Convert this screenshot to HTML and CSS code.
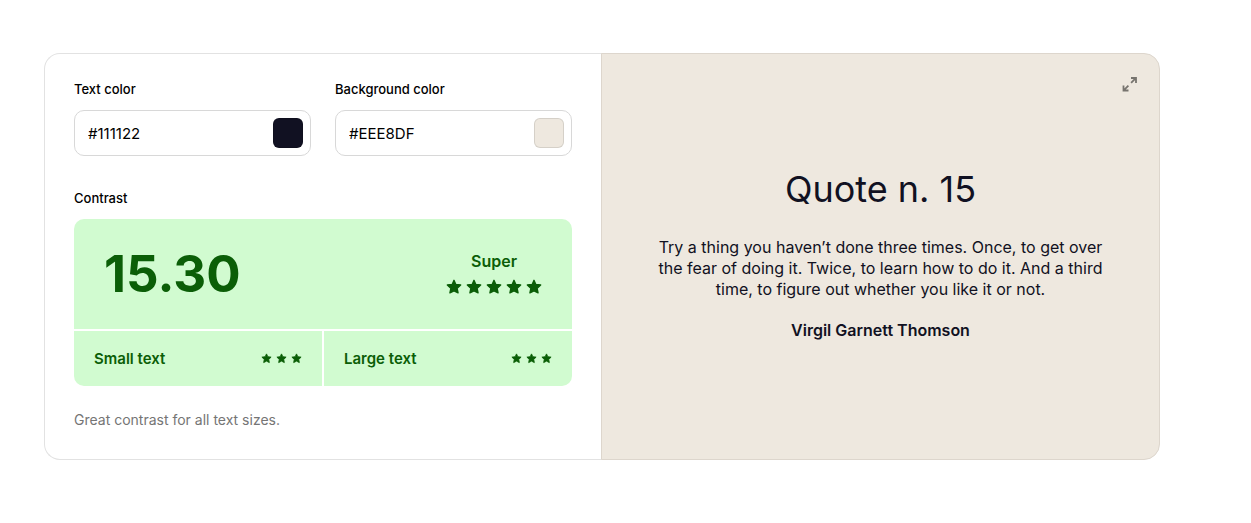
FILE: index.html
```html
<!DOCTYPE html>
<html lang="en">
<head>
<meta charset="utf-8">
<title>Contrast checker</title>
<link rel="stylesheet" href="styles.css">
</head>
<body>
<svg class="defs" aria-hidden="true">
  <symbol id="star" viewBox="0 0 16 16">
    <path d="M8 1.300l1.900 4.100 4.800.6-3.500 3.300.9 4.600L8 11.800l-4.100 2.100.9-4.600L1.300 6l4.800-.6z" fill="currentColor" stroke="currentColor" stroke-width="1.300" stroke-linejoin="round"/>
  </symbol>
</svg>
<main class="checker">
  <section class="panel settings">
    <div class="fields">
      <div class="field">
        <label class="label" for="text-color">Text color</label>
        <div class="control">
          <input class="hex" id="text-color" type="text" value="#111122">
          <input class="swatch" type="color" value="#111122" aria-label="Pick text color">
        </div>
      </div>
      <div class="field">
        <label class="label" for="background-color">Background color</label>
        <div class="control">
          <input class="hex" id="background-color" type="text" value="#EEE8DF">
          <input class="swatch" type="color" value="#eee8df" aria-label="Pick background color">
        </div>
      </div>
    </div>
    <h2 class="label">Contrast</h2>
    <div class="result">
      <div class="score">
        <strong class="ratio">15.30</strong>
        <div class="rating">
          <span>Super</span>
          <div class="stars large" role="img" aria-label="5 stars">
            <svg><use href="#star"/></svg><svg><use href="#star"/></svg><svg><use href="#star"/></svg><svg><use href="#star"/></svg><svg><use href="#star"/></svg>
          </div>
        </div>
      </div>
      <div class="size">
        <span>Small text</span>
        <div class="stars" role="img" aria-label="3 stars">
          <svg><use href="#star"/></svg><svg><use href="#star"/></svg><svg><use href="#star"/></svg>
        </div>
      </div>
      <div class="size">
        <span>Large text</span>
        <div class="stars" role="img" aria-label="3 stars">
          <svg><use href="#star"/></svg><svg><use href="#star"/></svg><svg><use href="#star"/></svg>
        </div>
      </div>
    </div>
    <p class="note">Great contrast for all text sizes.</p>
  </section>
  <section class="panel preview">
    <button class="expand" type="button" aria-label="Full screen">
      <svg viewBox="0 0 16 16" fill="none" stroke="currentColor" stroke-width="1.800"><path d="M9 2H14V7M13.800 2.200L9.100 6.900M1.500 9.500V14.500H6.500M1.700 14.300l4.700-4.700"/></svg>
    </button>
    <h1 class="title">Quote n. 15</h1>
    <p class="quote">Try a thing you haven’t done three times. Once, to get over the fear of doing it. Twice, to learn how to do it. And a third time, to figure out whether you like it or not.</p>
    <p class="author">Virgil Garnett Thomson</p>
  </section>
</main>
</body>
</html>
```
FILE: styles.css
```css
* { box-sizing: border-box; }

body {
  margin: 0;
  padding: 53px 91px 53px 44px;
  background: #fff;
  color: #000;
  font-family: Inter, "Liberation Sans", sans-serif;
}

h1, h2, p { margin: 0; }

.defs { display: none; }

.checker {
  display: grid;
  grid-template-columns: minmax(0, 1fr) minmax(0, 1fr);
}

.panel { border: 1px solid #e2e2e2; }

.settings {
  padding: 28px 30px 29px 29px;
  border-right: 0;
  border-radius: 16px 0 0 16px;
}

.fields {
  display: grid;
  grid-template-columns: minmax(0, 1fr) minmax(0, 1fr);
  gap: 24px;
  margin-bottom: 35px;
}

.label {
  display: block;
  margin-bottom: 13px;
  font-size: 13px;
  font-weight: 500;
  line-height: 15px;
}

.control {
  display: flex;
  align-items: center;
  height: 46px;
  padding: 0 7px 0 13px;
  border: 1px solid #d8d8d8;
  border-radius: 10px;
}

.hex {
  flex: 1;
  min-width: 0;
  padding: 2px 0 0;
  border: 0;
  outline: 0;
  background: none;
  color: #000;
  font: 400 15px/20px Inter, "Liberation Sans", sans-serif;
}

.swatch {
  width: 30px;
  height: 30px;
  padding: 0;
  border: 0;
  background: none;
  appearance: none;
  cursor: pointer;
}

.swatch::-webkit-color-swatch-wrapper { padding: 0; }

.swatch::-webkit-color-swatch {
  border: 1px solid rgba(0, 0, 0, 0.1);
  border-radius: 6px;
}

.result {
  display: grid;
  grid-template-columns: 1fr 1fr;
  gap: 2px;
  overflow: hidden;
  border-radius: 10px;
  color: #0b5e07;
}

.score,
.size {
  display: flex;
  align-items: center;
  justify-content: space-between;
  background: #d1fbd0;
}

.score {
  grid-column: 1 / -1;
  height: 110px;
  padding: 0 30px;
}

.ratio {
  font-size: 51px;
  font-weight: 700;
  line-height: 60px;
}

.rating {
  display: grid;
  justify-items: center;
  gap: 8px;
  padding-bottom: 2px;
  font-size: 16px;
  font-weight: 600;
  line-height: 20px;
}

.size {
  height: 55px;
  padding: 0 20px;
  font-size: 15px;
  font-weight: 600;
  line-height: 20px;
}

.stars {
  display: flex;
  gap: 4px;
}

.stars svg {
  width: 11px;
  height: 11px;
}

.stars.large svg {
  width: 16px;
  height: 16px;
}

.note {
  margin-top: 24px;
  color: #757575;
  font-size: 14px;
  line-height: 20px;
}

.preview {
  position: relative;
  display: flex;
  flex-direction: column;
  align-items: center;
  justify-content: center;
  margin-left: -1px;
  padding: 28px 50px 34px;
  border-color: #ddd6cd;
  border-radius: 0 16px 16px 0;
  background: #eee8df;
  color: #111122;
  text-align: center;
}

.expand {
  position: absolute;
  top: 22px;
  right: 21px;
  padding: 0;
  border: 0;
  background: none;
  color: #77746f;
  cursor: pointer;
}

.expand svg {
  display: block;
  width: 16px;
  height: 16px;
}

.title {
  font-size: 36px;
  font-weight: 400;
  line-height: 44px;
}

.quote {
  max-width: 460px;
  margin: 26px 0 20px;
  font-size: 16px;
  line-height: 21px;
}

.author {
  font-size: 16px;
  font-weight: 600;
  line-height: 21px;
}
```
